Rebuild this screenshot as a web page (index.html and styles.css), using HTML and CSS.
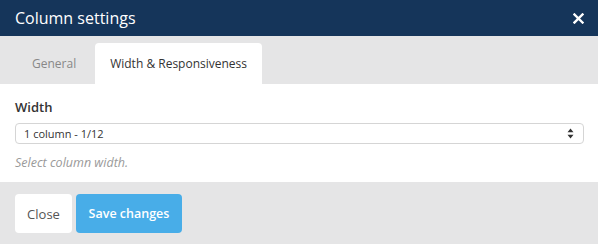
FILE: index.html
```html
<!DOCTYPE html>
<html>
<head>
<meta charset="utf-8">
<link rel="stylesheet" href="styles.css">
</head>
<body>
<div class="modal">
  <div class="header">
    <div class="title">Column settings</div>
    <svg class="close-x" width="11" height="11" viewBox="0 0 11 11"><path d="M1.5 1.5 L9.5 9.5 M9.5 1.5 L1.5 9.5" stroke="#fff" stroke-width="2.4" stroke-linecap="square"/></svg>
  </div>
  <div class="tabs">
    <div class="tab">General</div>
    <div class="tab active">Width &amp; Responsiveness</div>
  </div>
  <div class="body">
    <div class="label">Width</div>
    <div class="select">
      <span>1 column - 1/12</span>
      <svg width="7" height="11" viewBox="0 0 7 11"><path d="M3.5 0.5 L6.5 4.3 L0.5 4.3 Z M3.5 10.5 L6.5 6.7 L0.5 6.7 Z" fill="#333"/></svg>
    </div>
    <div class="help">Select column width.</div>
  </div>
  <div class="footer">
    <div class="btn btn-close">Close</div>
    <div class="btn btn-save">Save changes</div>
  </div>
</div>
</body>
</html>
```

FILE: styles.css
```css
html, body {
  margin: 0;
  padding: 0;
}
body {
  font-family: "Open Sans", "Liberation Sans", sans-serif;
  background: #fff;
  width: 598px;
  height: 244px;
  overflow: hidden;
}
.modal {
  display: flex;
  flex-direction: column;
  height: 244px;
}
.header {
  height: 36px;
  background: #15355a;
  display: flex;
  align-items: center;
  justify-content: space-between;
  padding: 0 15px;
}
.title {
  color: #fff;
  font-size: 16px;
  line-height: 20px;
  margin-top: -1px;
}
.close-x {
  display: block;
  margin-right: -1px;
}
.tabs {
  height: 48px;
  box-sizing: border-box;
  background: #e5e5e6;
  display: flex;
  align-items: flex-end;
  padding-left: 15px;
}
.tab {
  height: 41px;
  box-sizing: border-box;
  padding: 0 18px 0 17px;
  display: flex;
  align-items: center;
  font-size: 12px;
  color: #888;
  border-radius: 4px 4px 0 0;
}
.tab.active {
  background: #fff;
  color: #333;
  padding: 0 15px;
  margin-left: 1px;
}
.body {
  padding: 14px 14px 0 15px;
  height: 98px;
  box-sizing: border-box;
}
.label {
  font-size: 13px;
  font-weight: 600;
  color: #333;
  line-height: 18px;
}
.select {
  margin-top: 7px;
  height: 21px;
  box-sizing: border-box;
  border: 1px solid #d5d5d5;
  border-radius: 4px;
  display: flex;
  align-items: center;
  justify-content: space-between;
  padding: 0 9px 0 8px;
  font-size: 11px;
  color: #333;
}
.select span {
  margin-top: -1px;
}
.help {
  margin-top: 11px;
  font-size: 12.5px;
  font-style: italic;
  color: #999;
  line-height: 16px;
}
.footer {
  flex: 1;
  background: #e5e5e6;
  display: flex;
  align-items: flex-start;
  padding: 12px 15px 0;
  gap: 4px;
}
.btn {
  height: 39px;
  box-sizing: border-box;
  border-radius: 4px;
  display: flex;
  align-items: center;
  font-size: 12.5px;
}
.btn-close {
  background: #fff;
  color: #555;
  width: 57px;
  justify-content: center;
  font-size: 13px;
}
.btn-save {
  background: #48ade8;
  color: #fff;
  font-weight: 600;
  width: 106px;
  justify-content: center;
}
```
